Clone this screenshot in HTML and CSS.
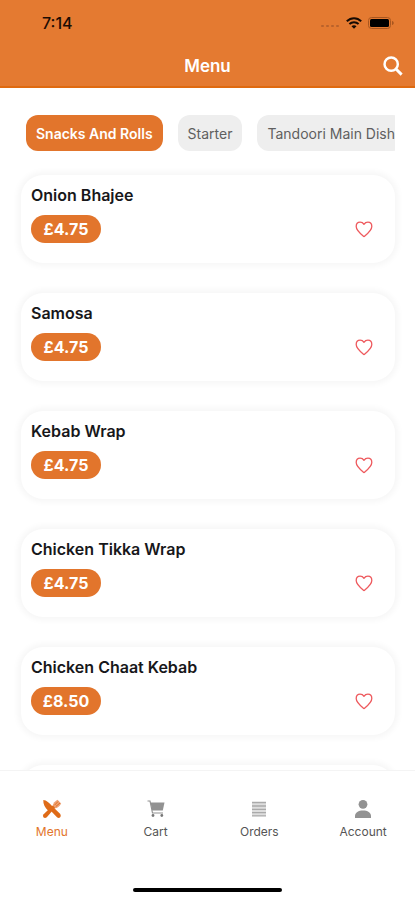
FILE: index.html
```
<!DOCTYPE html>
<html lang="en">
<head>
<meta charset="utf-8">
<meta name="viewport" content="width=device-width, initial-scale=1">
<title>Menu</title>
<link rel="stylesheet" href="styles.css">
</head>
<body>
<svg class="defs" aria-hidden="true">
  <symbol id="heart" viewBox="0 0 18 17"><path d="M9 15.6C5.500 12.700 1.200 9.500 1.200 5.500C1.200 3 2.900 1.200 5.100 1.200C6.900 1.200 8.300 2.200 9 3.300C9.700 2.200 11.100 1.200 12.900 1.200C15.100 1.200 16.800 3 16.800 5.500C16.800 9.500 12.500 12.700 9 15.600Z" fill="none" stroke="#ee5a5e" stroke-width="1.300" stroke-linejoin="round"/></symbol>
</svg>
<header class="header">
  <div class="status">
    <span class="time">7:14</span>
    <div class="indicators">
      <svg width="20" height="6" viewBox="0 0 20 6" fill="#b9622b"><rect x="1" y="2" width="3" height="2" rx="1"/><rect x="6" y="2" width="3" height="2" rx="1"/><rect x="11" y="2" width="3" height="2" rx="1"/><rect x="16" y="2" width="3" height="2" rx="1"/></svg>
      <svg width="16" height="12" viewBox="0 0 16 12" fill="none" stroke="#160a03" stroke-width="2"><path d="M.8 4.300C5 .2 11 .2 15.200 4.300M3.400 7C6 4.500 10 4.500 12.600 7"/><path d="M8 11.800L5.500 9.200C7 8 9 8 10.500 9.200Z" fill="#160a03" stroke="none"/></svg>
      <svg width="27" height="12" viewBox="0 0 27 12"><rect x=".5" y=".5" width="22" height="11" rx="3" fill="none" stroke="#a8561f"/><rect x="2" y="2" width="19" height="8" rx="1.500" fill="#000"/><path d="M24 4C26.300 4.500 26.300 7.500 24 8Z" fill="#a8561f"/></svg>
    </div>
  </div>
  <div class="titlebar">
    <h1 class="title">Menu</h1>
    <button class="search" type="button" aria-label="Search"><svg width="20" height="20" viewBox="0 0 22 22" fill="none" stroke="#fff"><circle cx="9" cy="9" r="7.300" stroke-width="2.700"/><path d="M14.300 14.300L20.500 20.500" stroke-width="3.200"/></svg></button>
  </div>
</header>
<main class="content">
  <div class="chips">
    <button class="chip chip-active" type="button">Snacks And Rolls</button>
    <button class="chip" type="button">Starter</button>
    <button class="chip" type="button">Tandoori Main Dish</button>
  </div>
  <ul class="list">
    <li class="card"><h2 class="name">Onion Bhajee</h2><div class="row"><span class="price">£4.75</span><button class="fav" type="button" aria-label="Favourite Onion Bhajee"><svg width="18" height="17"><use href="#heart"/></svg></button></div></li>
    <li class="card"><h2 class="name">Samosa</h2><div class="row"><span class="price">£4.75</span><button class="fav" type="button" aria-label="Favourite Samosa"><svg width="18" height="17"><use href="#heart"/></svg></button></div></li>
    <li class="card"><h2 class="name">Kebab Wrap</h2><div class="row"><span class="price">£4.75</span><button class="fav" type="button" aria-label="Favourite Kebab Wrap"><svg width="18" height="17"><use href="#heart"/></svg></button></div></li>
    <li class="card"><h2 class="name">Chicken Tikka Wrap</h2><div class="row"><span class="price">£4.75</span><button class="fav" type="button" aria-label="Favourite Chicken Tikka Wrap"><svg width="18" height="17"><use href="#heart"/></svg></button></div></li>
    <li class="card"><h2 class="name">Chicken Chaat Kebab</h2><div class="row"><span class="price">£8.50</span><button class="fav" type="button" aria-label="Favourite Chicken Chaat Kebab"><svg width="18" height="17"><use href="#heart"/></svg></button></div></li>
    <li class="card"></li>
  </ul>
</main>
<footer class="footer">
  <nav class="tabs">
    <a class="tab tab-active" href="#menu"><svg width="20" height="20" viewBox="0 0 20 20"><path d="M10.500 7.500C11 4 13 2.300 15.500 .8L19.200 4.500C17.500 7.500 15.500 9 12.500 9.500Z" fill="#eea377"/><path d="M12.500 6.200L16 2.500M13.800 7.500L18 4" stroke="#df6b18" stroke-width=".9"/><path d="M1.300 1C4.500 1.200 7.500 4 9.800 6.700L18.300 15Q19.500 17 18 18.500Q16.500 19.500 15 18.300L9 12L6 11.500C3 8.500 1 5 1.300 1Z" fill="#df6b18"/><path d="M13 8.800L4.800 18.200Q3 19.700 1.400 18.300Q.300 16.700 1.600 15.200L10.800 6.600Z" fill="#df6b18"/></svg>Menu</a>
    <a class="tab" href="#cart"><svg width="20" height="20" viewBox="0 0 20 20"><path d="M4.500 3.500H18.500L16.800 11.500H6.200Z" fill="#929292"/><path d="M1.500 2H4L6.500 14H17" fill="none" stroke="#929292" stroke-width="1.200"/><circle cx="7" cy="16.500" r="1.400" fill="#777"/><circle cx="15.800" cy="16.500" r="1.400" fill="#777"/></svg>Cart</a>
    <a class="tab" href="#orders"><svg width="20" height="20" viewBox="0 0 20 20"><path d="M3 3.500H17V17H3Z" fill="#dedede"/><path d="M3 3.500H17M3 7H17M3 10.300H17M3 13.600H17M3 16.800H17" stroke="#aaa" stroke-width="1.300"/></svg>Orders</a>
    <a class="tab" href="#account"><svg width="20" height="20" viewBox="0 0 20 20" fill="#929292"><circle cx="10" cy="5.300" r="4.400"/><path d="M2 19V17C2 13.500 5.500 11.500 10 11.500S18 13.500 18 17V19Z"/></svg>Account</a>
  </nav>
  <div class="home"></div>
</footer>
</body>
</html>
```

FILE: styles.css
```
* { box-sizing: border-box; }
body {
  margin: 0;
  height: 100vh;
  display: flex;
  flex-direction: column;
  overflow: hidden;
  background: #fff;
  color: #17171a;
  font-family: Inter, "Liberation Sans", sans-serif;
}
button { border: 0; font: inherit; padding: 0; background: none; }
h1, h2, ul { margin: 0; padding: 0; }
svg { display: block; }
.defs { display: none; }

.header {
  background: #e47a31;
  border-bottom: 2px solid #df6a10;
}
.status {
  height: 46px;
  padding: 0 20px 0 42px;
  display: flex;
  align-items: center;
  justify-content: space-between;
}
.time { font-size: 16px; font-weight: 500; color: #1c0d04; }
.indicators { display: flex; align-items: center; gap: 6px; }
.indicators svg:first-child { align-self: flex-end; }
.titlebar {
  height: 40px;
  padding: 0 12px;
  display: grid;
  grid-template-columns: 1fr auto 1fr;
  align-items: center;
}
.title {
  grid-column: 2;
  color: #fff;
  font-size: 17px;
  font-weight: 600;
}
.search { justify-self: end; }

.content {
  flex: 1;
  min-height: 0;
  overflow: hidden;
  padding-top: 27px;
}
.chips {
  display: flex;
  gap: 15px;
  margin: 0 20px 0 26px;
  overflow: hidden;
}
.chip {
  flex: none;
  height: 36px;
  padding: 0 10px;
  border-radius: 12px;
  background: #eee;
  color: #5f5f5f;
  font-size: 14px;
  font-weight: 400;
}
.chip-active { background: #e2752c; color: #fff; font-weight: 600; }
.list {
  list-style: none;
  display: flex;
  flex-direction: column;
  gap: 30px;
  padding: 24px 20px 0 21px;
}
.card {
  flex: none;
  height: 88px;
  padding: 10px 22px 0 10px;
  border-radius: 22px;
  background: #fff;
  box-shadow: 0 0 6px 3px rgba(0, 0, 0, 0.04);
}
.name { font-size: 16px; line-height: 20px; font-weight: 600; }
.row {
  display: flex;
  align-items: center;
  justify-content: space-between;
  margin-top: 10px;
}
.price {
  width: 70px;
  height: 28px;
  border-radius: 14px;
  background: #e2752c;
  color: #fff;
  font-size: 16px;
  line-height: 28px;
  font-weight: 700;
  text-align: center;
}

.footer {
  height: 130px;
  padding-bottom: 8px;
  display: flex;
  flex-direction: column;
  justify-content: space-between;
  align-items: center;
  background: #fff;
  border-top: 1px solid #f4f4f4;
  z-index: 1;
}
.tabs {
  width: 100%;
  display: grid;
  grid-template-columns: repeat(4, 1fr);
  padding-top: 28px;
}
.tab {
  display: flex;
  flex-direction: column;
  align-items: center;
  gap: 5px;
  color: #555;
  font-size: 12px;
  line-height: 16px;
  text-decoration: none;
}
.tab-active { color: #e2752c; }
.home {
  width: 36%;
  height: 4px;
  border-radius: 2px;
  background: #000;
}
```
